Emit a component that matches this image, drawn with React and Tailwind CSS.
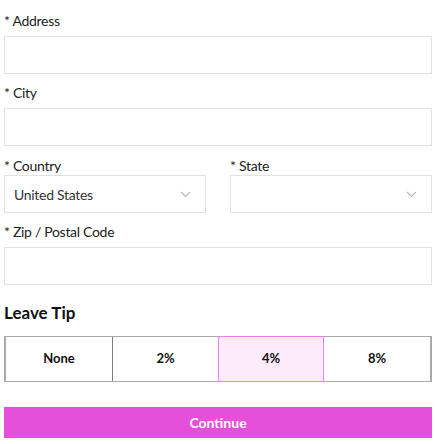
import React from "react";

function Chevron() {
  return (
    <svg width="11" height="7" viewBox="0 0 11 7" fill="none" className="shrink-0">
      <path d="M1 1l4.5 4.5L10 1" stroke="#b5b5b5" strokeWidth="1.1" />
    </svg>
  );
}

function Label({ children, className = "h-5 mb-[5px]" }) {
  return (
    <div className={"leading-5 text-[14px] tracking-[-0.3px] text-[#222] " + className}>* {children}</div>
  );
}

function Input({ className = "" }) {
  return <div className={"h-[38px] border border-[#e2e2e2] bg-white " + className} />;
}

function Select({ value }) {
  return (
    <div className="h-[38px] border border-[#e2e2e2] bg-white flex items-center justify-between pl-[9px] pr-[14px] text-[14px] tracking-[-0.3px] text-[#333]">
      <span>{value}</span>
      <Chevron />
    </div>
  );
}

export default function App() {
  const tips = ["None", "2%", "4%", "8%"];
  return (
    <div className="w-[435px] h-[444px] bg-white pl-1 pr-[3px] pt-[11px]" style={{ fontFamily: "Lato, 'Noto Sans', sans-serif" }}>
      <Label>Address</Label>
      <Input className="mb-[9px]" />
      <Label>City</Label>
      <Input className="mb-[10px]" />
      <div className="flex gap-6 mb-[9px]">
        <div className="flex-1">
          <Label className="h-[19px]">Country</Label>
          <Select value="United States" />
        </div>
        <div className="flex-1">
          <Label className="h-[19px]">State</Label>
          <Select value="" />
        </div>
      </div>
      <Label>Zip / Postal Code</Label>
      <Input />
      <div className="mt-4 h-6 leading-6 text-[17px] font-bold text-[#111]">Leave Tip</div>
      <div className="mt-[11px] grid grid-cols-4 h-[46px] border-y border-[#a9a9a9] border-l-2 border-r-2">
        {tips.map((t, i) => (
          <div
            key={t}
            className={
              "flex items-center justify-center text-[13px] font-bold text-[#111] " +
              (i === 2
                ? "bg-[#fdeafb] border border-[#f080e8] -my-px"
                : i === 1
                ? "border-l border-[#7d7d7d]"
                : "")
            }
          >
            {t}
          </div>
        ))}
      </div>
      <div className="mt-[25px] h-[31px] bg-[#e64fd9] flex items-center justify-center text-white text-[14px] font-bold">
        Continue
      </div>
    </div>
  );
}
